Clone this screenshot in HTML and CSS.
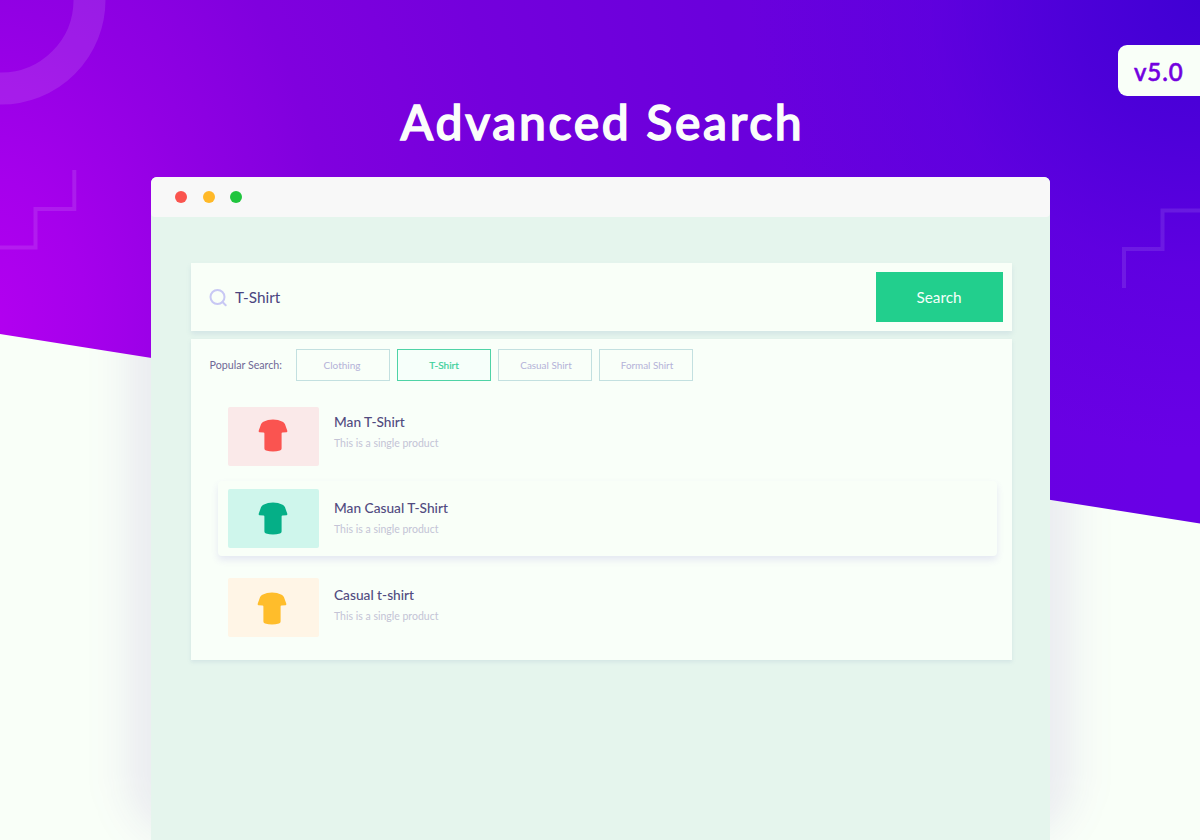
FILE: index.html
```html
<!DOCTYPE html>
<html lang="en">
<head>
<meta charset="utf-8">
<title>Advanced Search</title>
<link rel="stylesheet" href="styles.css">
</head>
<body>
<svg class="symbols" width="0" height="0">
  <symbol id="shirt" viewBox="0 0 30 33">
    <path d="M10 .9Q15 -.1 20 .9L24.600 2.700Q26.200 3.500 27 5.300L29.300 11.800Q29.500 13 28.500 13.200L24.500 13.500Q23.600 13.600 23.600 14.500V29.500Q23.600 31 22 31.600Q15 33.600 8 31.600Q6.400 31 6.400 29.500V14.500Q6.400 13.600 5.500 13.500L1.500 13.200Q.5 13 .7 11.800L3 5.300Q3.800 3.500 5.400 2.700Z" fill="currentColor"/>
  </symbol>
</svg>
<main class="page">
  <div class="glow"></div>
  <div class="backdrop"></div>
  <svg class="shapes" viewBox="0 0 1200 840">
    <circle cx="1" cy="0" r="88.500" fill="none" stroke="#fff" stroke-opacity=".11" stroke-width="32"/>
    <path d="M0 247.500H35.500V209H74.300V170" fill="none" stroke="#fff" stroke-opacity=".11" stroke-width="4"/>
    <path d="M1124 288V249H1162.500V210.500H1200" fill="none" stroke="#fff" stroke-opacity=".1" stroke-width="4"/>
  </svg>
  <div class="version">v5.0</div>
  <h1 class="title">Advanced Search</h1>
  <section class="window">
    <header class="titlebar">
      <span class="dot dot-red"></span>
      <span class="dot dot-yellow"></span>
      <span class="dot dot-green"></span>
    </header>
    <div class="content">
      <form class="searchbar">
        <svg class="search-icon" viewBox="0 0 18 18"><circle cx="8.500" cy="8" r="7"/><path d="M13.500 13L16.700 16.200"/></svg>
        <span class="query">T-Shirt</span>
        <button class="submit" type="button">Search</button>
      </form>
      <div class="panel">
        <div class="popular">
          <span class="popular-label">Popular Search:</span>
          <span class="chip chip-clothing">Clothing</span>
          <span class="chip chip-active">T-Shirt</span>
          <span class="chip chip-casual">Casual Shirt</span>
          <span class="chip chip-casual">Formal Shirt</span>
        </div>
        <article class="product">
          <div class="thumb thumb-red"><svg class="shirt"><use href="#shirt"/></svg></div>
          <div class="info"><h2 class="name">Man T-Shirt</h2><p class="desc">This is a single product</p></div>
        </article>
        <article class="product product-active">
          <div class="thumb thumb-green"><svg class="shirt"><use href="#shirt"/></svg></div>
          <div class="info"><h2 class="name">Man Casual T-Shirt</h2><p class="desc">This is a single product</p></div>
        </article>
        <article class="product product-last">
          <div class="thumb thumb-yellow"><svg class="shirt"><use href="#shirt"/></svg></div>
          <div class="info"><h2 class="name">Casual t-shirt</h2><p class="desc">This is a single product</p></div>
        </article>
      </div>
    </div>
  </section>
</main>
</body>
</html>
```
FILE: styles.css
```css
* { box-sizing: border-box; }
body { margin: 0; font-family: Lato, sans-serif; }
.symbols { position: absolute; }

.page {
  position: relative;
  width: 1200px;
  height: 840px;
  overflow: hidden;
  padding: 90px 150px 0;
  background: #f9fff8;
}
.glow {
  position: absolute;
  inset: 220px 127px 0;
  border-radius: 60px;
  background: rgba(80, 20, 160, .085);
  filter: blur(20px);
}
.backdrop {
  position: absolute;
  inset: 0;
  clip-path: polygon(0 0, 1200px 0, 1200px 523.500px, 0 334px);
  background:
    radial-gradient(circle at 1200px 0, #4000d4 0, rgba(70, 0, 214, .8) 130px, rgba(80, 0, 218, .4) 270px, rgba(90, 0, 220, 0) 450px),
    radial-gradient(ellipse 1200px 1700px at -20px 330px, #b400f0 0, #a600ec 9%, #9200e4 19%, #8000de 30%, #7400dc 45%, #6a00dc 65%, #6900e6 100%);
}
.shapes { position: absolute; inset: 0; width: 1200px; height: 840px; }

.version {
  position: absolute;
  top: 45px;
  right: 0;
  width: 82px;
  height: 51px;
  padding-left: 16px;
  border-radius: 9px 0 0 9px;
  background: #f9fff8;
  color: #7300df;
  font-size: 24px;
  font-weight: 500;
  line-height: 53px;
  letter-spacing: .9px;
  -webkit-text-stroke: .6px #7300df;
  stroke-linejoin: round;
}
.title {
  position: relative;
  margin: 0;
  height: 87px;
  padding-left: 5px;
  color: #fbfdfb;
  font-size: 48px;
  font-weight: 500;
  line-height: 63px;
  letter-spacing: 2.700px;
  text-align: center;
  white-space: nowrap;
  -webkit-text-stroke: 1.500px #fbfdfb;
  stroke-linejoin: round;
}

.window {
  position: relative;
  width: 899px;
  height: 663px;
  margin-left: .5px;
  border-radius: 6px 6px 0 0;
  background: #e5f5ed;
  overflow: hidden;
}
.titlebar {
  display: flex;
  align-items: center;
  gap: 15.500px;
  height: 40px;
  padding-left: 24.500px;
  border-radius: 0 0 4px 4px;
  background: #f8f8f8;
}
.dot { width: 12px; height: 12px; border-radius: 50%; }
.dot-red { background: #fa544e; }
.dot-yellow { background: #ffb928; }
.dot-green { background: #20c53e; }

.content { padding: 46px 37.500px 0 40.500px; }
.searchbar {
  display: flex;
  align-items: center;
  height: 68px;
  padding: 0 9px 0 18px;
  background: #f9fff8;
  box-shadow: 0 3px 5px rgba(90, 120, 180, .13);
}
.search-icon {
  width: 18px;
  height: 18px;
  margin-top: 1px;
  fill: none;
  stroke: #c8c8f4;
  stroke-width: 2;
  stroke-linecap: round;
}
.query { flex: 1; margin: 0 0 0 8px; color: #4b4580; font-size: 15.300px; }
.submit {
  width: 127px;
  height: 50px;
  padding: 0 1px 1px 0;
  border: 0;
  background: #22cf8d;
  color: #f5fffa;
  font: 15.300px Lato, sans-serif;
}

.panel {
  height: 321px;
  margin-top: 7.500px;
  padding: 10px 15px 0 18px;
  background: #f9fff9;
  box-shadow: 0 2px 4px rgba(90, 120, 180, .13);
}
.popular { display: flex; align-items: center; gap: 7px; height: 32px; }
.popular-label { width: 80px; padding-left: .5px; color: #6f6896; font-size: 10.700px; white-space: nowrap; }
.chip {
  width: 94px;
  height: 32px;
  border: 1px solid #c3e0e0;
  color: #b4b2d8;
  font-size: 10px;
  line-height: 30px;
  text-align: center;
}
.chip-clothing { padding-right: 2px; }
.chip-active { border-color: #4fd3a6; background: #f6fffa; color: #3ed19c; -webkit-text-stroke: .2px #3ed19c; }
.chip-casual { padding-left: 2px; font-size: 9.900px; }

.product {
  display: flex;
  gap: 15.500px;
  height: 75px;
  margin: 17px 0 0 8.500px;
  padding: 9px 10px 0;
}
.product-active {
  margin-top: 8px;
  padding-top: 8px;
  border-radius: 4px;
  background: #f9fff8;
  box-shadow: 0 4px 7px rgba(100, 80, 200, .13);
}
.product-last { margin-top: 13px; }
.thumb {
  display: flex;
  justify-content: center;
  width: 91px;
  height: 59px;
  padding: 12px 1px 0 0;
  border-radius: 2px;
}
.thumb-red { background: #fae9e9; color: #fa5450; }
.thumb-green { background: #cff6ec; color: #05af87; padding-top: 13.500px; }
.thumb-yellow { background: #fff5e6; color: #ffbd2b; padding: 14px 2px 0 0; }
.shirt { width: 30px; height: 33px; }
.info { padding-top: 6px; }
.product-active .info { padding-top: 10px; }
.product-last .info { padding-top: 8px; }
.name { margin: 0; color: #514b80; font-size: 13.700px; font-weight: 500; line-height: 17px; }
.desc { margin: 7px 0 0; color: #c4c4d6; font-size: 10.500px; line-height: 13px; }
```
